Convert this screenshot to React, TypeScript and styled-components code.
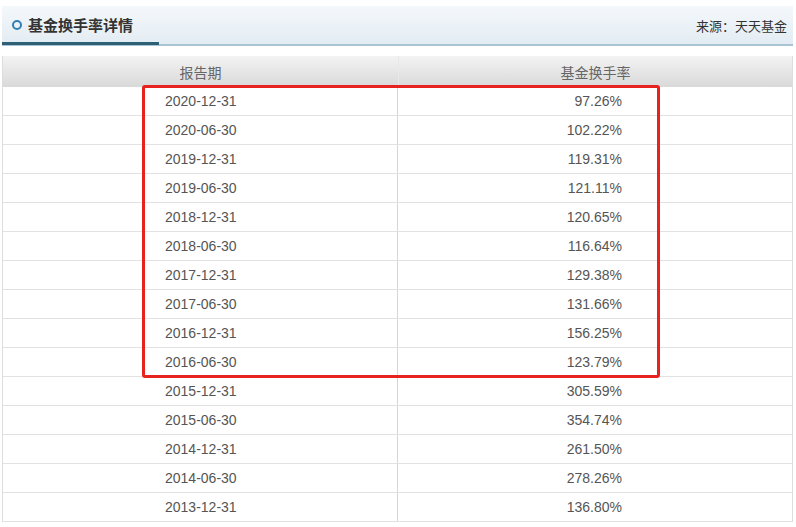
import React from "react";
import styled, { createGlobalStyle } from "styled-components";

const rows: [string, string][] = [
  ["2020-12-31", "97.26%"],
  ["2020-06-30", "102.22%"],
  ["2019-12-31", "119.31%"],
  ["2019-06-30", "121.11%"],
  ["2018-12-31", "120.65%"],
  ["2018-06-30", "116.64%"],
  ["2017-12-31", "129.38%"],
  ["2017-06-30", "131.66%"],
  ["2016-12-31", "156.25%"],
  ["2016-06-30", "123.79%"],
  ["2015-12-31", "305.59%"],
  ["2015-06-30", "354.74%"],
  ["2014-12-31", "261.50%"],
  ["2014-06-30", "278.26%"],
  ["2013-12-31", "136.80%"],
];

export default function App() {
  return (
    <>
      <Global />
      <Page>
        <TitleBar>
          <Title>
            <Ring />
            基金换手率详情
          </Title>
          <Source>来源：天天基金</Source>
        </TitleBar>
        <TableWrap>
          <HeadRow>
            <HeadCell>报告期</HeadCell>
            <HeadCell>基金换手率</HeadCell>
          </HeadRow>
          {rows.map(([d, v]) => (
            <Row key={d}>
              <DateCell>{d}</DateCell>
              <RateCell>{v}</RateCell>
            </Row>
          ))}
          <Highlight />
        </TableWrap>
      </Page>
    </>
  );
}

const Global = createGlobalStyle`
  body { margin: 0; background: #fff; font-family: "Liberation Sans", "Noto Sans CJK SC", sans-serif; }
`;

const Page = styled.div`
  width: 796px;
  height: 527px;
  padding: 6px 3px 0 2px;
  box-sizing: border-box;
  overflow: hidden;
`;

const TitleBar = styled.div`
  height: 40px;
  display: flex;
  align-items: center;
  justify-content: space-between;
  background: linear-gradient(to bottom, #f4f8fb, #e3ecf3);
  border-bottom: 2px solid #a9c3d4;
  box-sizing: border-box;
`;

const Title = styled.div`
  height: 100%;
  display: flex;
  align-items: center;
  gap: 6px;
  padding: 0 8px 0 10px;
  font-size: 15px;
  font-weight: bold;
  color: #333;
  border-bottom: 3px solid #2d5f75;
  margin-bottom: -2px;
  box-sizing: border-box;
  width: 157px;
`;

const Ring = styled.span`
  width: 6px;
  height: 6px;
  border: 2px solid #2f7fb5;
  border-radius: 50%;
`;

const Source = styled.div`
  font-size: 13px;
  color: #333;
  padding-right: 6px;
`;

const TableWrap = styled.div`
  margin-top: 10px;
  position: relative;
  border-left: 1px solid #ddd;
  border-right: 1px solid #ddd;
`;

const HeadRow = styled.div`
  display: grid;
  grid-template-columns: 395px 1fr;
  height: 31px;
  background: linear-gradient(to bottom, #f3f3f3, #d9d9d9);
`;

const HeadCell = styled.div`
  display: flex;
  align-items: center;
  justify-content: center;
  font-size: 14px;
  color: #666;
  & + & { border-left: 1px solid #e8e8e8; }
`;

const Row = styled.div`
  display: grid;
  grid-template-columns: 395px 1fr;
  height: 29px;
  border-bottom: 1px solid #e2e2e2;
  box-sizing: border-box;
  font-size: 14px;
  color: #555;
`;

const DateCell = styled.div`
  display: flex;
  align-items: center;
  padding-left: 162px;
  border-right: 1px solid #d6d6d6;
`;

const RateCell = styled.div`
  display: flex;
  align-items: center;
  justify-content: flex-end;
  padding-right: 170px;
`;

const Highlight = styled.div`
  position: absolute;
  left: 139px;
  top: 29px;
  width: 518px;
  height: 293px;
  border: 3px solid #e8231f;
  border-radius: 3px;
  box-sizing: border-box;
  pointer-events: none;
`;
